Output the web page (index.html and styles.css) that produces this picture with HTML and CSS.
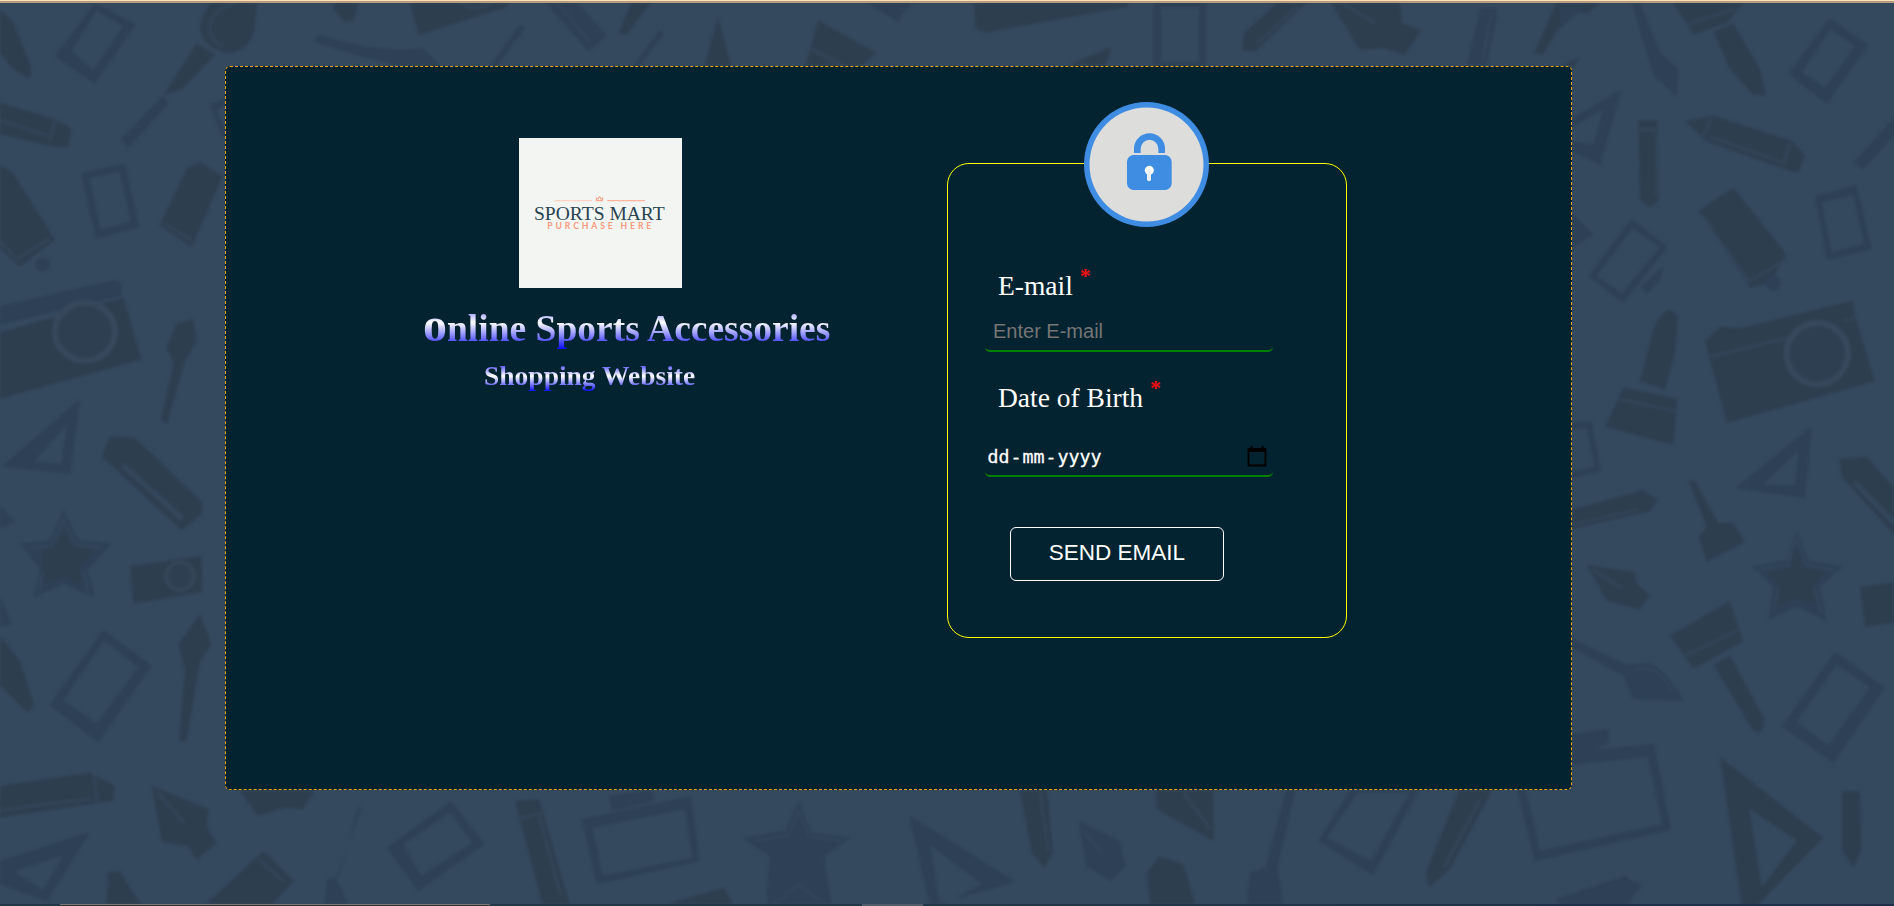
FILE: index.html
```html
<!DOCTYPE html>
<html lang="en">
<head>
<meta charset="utf-8">
<title>Online Sports Accessories</title>
<link rel="stylesheet" href="styles.css">
</head>
<body>
<svg class="pattern" viewBox="0 0 1894 906" aria-hidden="true">
  <!-- left side -->
  <g transform="scale(.33333 .5778)">
    <path class="ink" d="M0 15L40 40L90 110Q100 135 80 135L30 115L0 90Z"/>
    <path class="line" d="M165 97L285 5L408 43L283 145ZM215 88L280 122L370 45L290 18Z"/>
    <path class="ink" d="M590 75L645 95L545 155L490 165Z"/>
    <path class="line" d="M490 165L505 180L385 255L362 240Z"/>
    <path class="line" d="M630 182L676 168V238L665 235ZM650 192L676 225V180Z"/>
    <path class="ink" d="M0 178L160 205L215 222L205 255L165 255L0 232Z"/>
    <path class="gap" d="M0 208L145 235M165 205L150 245"/>
    <path class="ink" d="M0 285L40 300L165 415L60 462L0 430Z"/>
    <path class="gap" d="M0 418L50 448L150 412"/>
    <ellipse class="line" cx="127" cy="458" rx="22" ry="12"/>
    <path class="line" d="M243 300L375 283L418 393L288 413ZM268 308L302 397L392 384L360 297Z"/>
    <path class="ink" d="M478 390L560 292L600 280L668 305L575 428Z"/>
    <path class="gap" d="M490 388L575 415"/>
    <path class="line" d="M0 530L340 485L365 490V512L0 562Z"/>
    <path class="ink" d="M0 575L370 515L425 622L0 690Z"/>
    <ellipse class="ring" cx="255" cy="574" rx="90" ry="50"/>
    <path class="ink" d="M500 600L530 560L580 552L590 590L555 625L500 735L483 725L520 630Z"/>
    <path class="line" d="M5 808L240 690L212 820ZM100 800L185 802L200 735Z"/>
    <path class="ink" d="M305 790L330 755L405 757L608 870L605 890L545 918Z"/>
    <path class="gap wide" d="M368 805L548 898"/>
    <path class="line" d="M0 875L45 903L0 915Z"/>
    <path class="line" d="M190 882L235 935L335 940L265 985L285 1035L190 1010L100 1035L120 985L60 940L150 935Z"/>
    <path class="ink" d="M190 915L225 945L285 950L240 985L250 1015L190 1000L130 1008L125 950L160 945Z"/>
    <path class="gap" d="M90 948L155 945L190 900L228 943L305 948M115 1025L130 990M265 1025L252 990"/>
    <path class="ink" d="M390 980L605 962L607 1025L400 1045Z"/>
    <ellipse class="ring thin" cx="540" cy="997" rx="42" ry="24"/>
    <path class="line" d="M0 1030L35 1080L0 1085Z"/>
    <path class="ink" d="M0 1100L60 1145L100 1215Q95 1238 75 1230L0 1185Z"/>
    <path class="line" d="M148 1220L310 1090L455 1152L295 1285ZM190 1212L290 1252L415 1155L312 1108Z"/>
    <path class="ink" d="M535 1115L600 1062L635 1115L600 1145L560 1283L537 1283L555 1160Z"/>
    <path class="ink" d="M0 1360L270 1337L345 1360L340 1386L0 1415Z"/>
    <path class="gap" d="M0 1402L275 1382M282 1340L290 1388"/>
    <path class="ink" d="M455 1360L625 1400L620 1430L650 1460L590 1488L565 1465L485 1457Z"/>
    <path class="gap" d="M470 1370L555 1425"/>
    <path class="line" d="M0 1490L270 1440L140 1560L0 1530ZM40 1508L130 1540L190 1480Z"/>
    <path class="ink" d="M320 1510L360 1508L420 1564H335Z"/>
  </g>
  <!-- top edge -->
  <g transform="translate(200 0) scale(.44643 .33333)">
    <path class="ink" d="M25 8H128L122 90Q110 155 65 158Q10 150 0 90Q0 45 25 8Z"/>
    <path class="gap" d="M50 140Q20 120 22 70Q30 30 80 8"/>
    <path class="ink" d="M300 8H355L345 60L325 65L300 30ZM470 8H690V20L490 105Z"/>
    <path class="gap" d="M585 8Q615 40 655 8"/>
    <path class="line" d="M265 105L370 140L450 150L500 145L540 198H450L350 165L255 125ZM715 75L730 80L665 198H650Z"/>
    <path class="line" d="M775 8H845L912 105L870 155Z"/>
    <path class="gap" d="M800 8L872 125"/>
    <path class="ink" d="M965 8H1010L955 105L938 100ZM1160 50L1190 198H1130Z"/>
    <path class="line" d="M1028 92L1040 100L985 198H970ZM1495 8H1568V70Z"/>
    <path class="ink" d="M1385 60L1515 160L1480 198H1355Z"/>
    <path class="gap" d="M1368 145L1440 198"/>
  </g>
  <g transform="translate(900 0) scale(.44643 .33333)">
    <path class="line" d="M0 8H30L0 50ZM567 8H686V198H567ZM584 22V185H670V22Z"/>
    <path class="ink" d="M165 8H510V20L190 98L170 85ZM385 190L475 140L460 198H385Z"/>
    <path class="ink" d="M845 8H910L795 155L765 150L770 100Z"/>
    <path class="gap" d="M890 20L800 130"/>
    <path class="ink" d="M965 8H1120L1125 70L1168 90L1130 165L1085 145L1030 150Z"/>
    <path class="gap" d="M990 8L1065 70"/>
    <path class="line" d="M1300 25L1340 25L1315 195H1270Z"/>
    <path class="gap" d="M1325 45L1305 180"/>
    <path class="ink" d="M1470 8H1568L1540 40L1500 30L1440 165L1420 160ZM1480 198L1525 170L1510 198Z"/>
  </g>
  <!-- bottom edge -->
  <g transform="translate(0 776) scale(.60588 .33333)">
    <path class="ink" d="M395 42H520L500 100L470 95L425 120ZM340 384L435 225L485 315L450 384ZM180 285L235 384H175Z"/>
    <path class="gap" d="M425 245L468 318"/>
    <path class="line" d="M590 95H597L575 200L555 310L575 384H535L540 310L560 300Z"/>
    <path class="line" d="M638 215L745 75L800 205L690 345ZM665 205L695 300L780 200L742 110Z"/>
    <path class="ink" d="M850 75L890 70L940 384H895Z"/>
    <path class="gap" d="M890 120L925 355M852 130L895 110"/>
    <path class="line" d="M960 130L1140 60L1155 255L985 325ZM978 155L995 300L1143 245L1130 100ZM1005 60L1075 42L1080 75L1010 105Z"/>
    <path class="line" d="M1318 75L1340 170L1405 185L1360 240L1372 384H1265L1270 240L1225 185L1295 165Z"/>
    <path class="gap" d="M1318 105L1336 180L1388 195M1318 105L1300 178L1245 193M1278 384L1318 325L1360 384"/>
    <path class="ink" d="M1100 384L1195 335L1210 384Z"/>
  </g>
  <path class="line" d="M909 815L1016 882L930 906ZM930 845L940 906L982 884Z"/>
  <g transform="translate(944 776) scale(.60588 .33333)">
    <path class="ink" d="M125 42H170L180 230L165 275L145 230ZM350 42H445V195L350 100Z"/>
    <path class="gap" d="M158 42L172 225M395 50L440 160"/>
    <path class="line" d="M222 135L290 195L300 270L275 315L235 270Z"/>
    <path class="gap" d="M230 165L260 230"/>
    <path class="ink" d="M335 290L355 240L395 265L415 384H340Z"/>
    <path class="line" d="M565 42H580L550 280L560 384H500L505 290L530 275Z"/>
    <path class="line" d="M670 42H785L708 298L618 195ZM683 50L632 185L705 255L768 50Z"/>
    <path class="ink" d="M850 42H905L835 280L800 335L795 290Z"/>
    <path class="gap" d="M885 70L825 275"/>
    <path class="ink" d="M1010 370L1125 300L1150 340L1100 384H1020Z"/>
  </g>
  <!-- right side -->
  <path class="line" d="M1572 752L1654 744L1671 830L1535 861L1517 790H1526L1540 851L1662 824L1648 757L1572 765Z"/>
  <g transform="translate(1560 0) scale(.33333 .5778)">
    <path class="line" d="M0 8H80L0 50ZM215 5H240L300 90L355 120L350 168L280 130Z"/>
    <path class="ink" d="M340 5H550L500 40L400 60ZM460 55L520 40L600 120L618 165L580 165L510 120Z"/>
    <path class="gap" d="M380 42L530 15"/>
    <path class="line" d="M685 128L808 32L925 78L800 180ZM725 125L795 152L885 80L812 50Z"/>
    <path class="line" d="M36 205L185 155L120 285L36 262ZM36 220V245L100 250L130 190Z"/>
    <path class="ink" d="M235 208H292L297 345L270 360L240 345Z"/>
    <path class="gap" d="M235 225H290M289 230V340"/>
    <path class="ink" d="M375 210L460 200L700 245L735 270L715 300L660 290L440 245Z"/>
    <path class="gap" d="M450 237L665 280M455 205L430 235M690 248L670 285"/>
    <path class="line" d="M1002 205V235L910 293L882 280ZM36 370L100 405L36 430Z"/>
    <path class="line" d="M85 478L215 378L322 428L190 525ZM110 478L185 508L300 428L218 395ZM245 495L310 460L300 485L260 510Z"/>
    <path class="ink" d="M415 365L520 325L680 440L630 490L570 498Z"/>
    <path class="gap" d="M425 372L565 487L665 455"/>
    <ellipse class="line" cx="640" cy="490" rx="22" ry="14"/>
    <path class="line" d="M765 340L890 320L935 432L800 450ZM785 350L815 437L912 422L880 337Z"/>
    <path class="ink" d="M240 660L280 570Q325 515 355 550L345 610L315 675ZM190 670L352 690L340 770L135 738Z"/>
    <path class="gap" d="M175 690L350 712"/>
    <path class="ink" d="M435 590L480 565L540 568L880 520L885 545L945 660L500 732Z"/>
    <path class="gap" d="M450 617L680 585M850 556L890 548"/>
    <ellipse class="ring" cx="772" cy="612" rx="92" ry="53"/>
    <path class="line" d="M36 730H95L122 815L36 828ZM36 742V815L105 808L80 742Z"/>
    <path class="line" d="M525 845L755 738L735 862ZM610 838L705 840L715 780Z"/>
    <path class="ink" d="M838 795L920 790L1002 845V925L845 825Z"/>
    <path class="gap wide" d="M885 835L1002 905"/>
    <path class="ink" d="M36 882L250 848L292 865L270 885L36 915Z"/>
    <path class="gap" d="M36 908L235 882"/>
    <path class="ink" d="M385 832H405L475 905H520L555 938L440 972L415 930L440 912Z"/>
    <path class="ink" d="M80 978L225 990L230 1010L270 1030L240 1055L140 1040Z"/>
    <path class="gap" d="M95 985L185 1018"/>
    <path class="line" d="M710 918L745 970L850 980L780 1015L798 1073L710 1050L625 1073L640 1015L575 980L680 970Z"/>
    <path class="ink" d="M710 950L735 982L800 988L760 1015L770 1050L710 1035L650 1052L655 1015L620 990L690 982Z"/>
    <path class="gap" d="M600 984L682 978L710 932L740 978L825 986M640 1062L655 1020M784 1062L765 1020"/>
    <path class="ink" d="M900 1015L1002 1008V1078L915 1085Z"/>
    <path class="line" d="M36 1105L200 1150L270 1148Q320 1160 370 1213L220 1210L190 1170L36 1120Z"/>
    <path class="gap" d="M220 1160Q290 1145 335 1195"/>
    <path class="ink" d="M330 1100L510 1040L550 1110L400 1158ZM460 1150L510 1135L610 1240Q620 1275 580 1265Z"/>
    <path class="gap" d="M375 1135L535 1090"/>
    <path class="line" d="M665 1258L825 1128L975 1190L820 1320ZM710 1250L805 1290L930 1190L830 1150Z"/>
    <path class="ink" d="M480 1310L790 1450L590 1568H545ZM568 1400L605 1535L710 1455Z"/>
    <path class="ink" d="M845 1370H900L905 1470L880 1503L845 1470Z"/>
    <path class="line" d="M0 1555L190 1520L245 1530L200 1568H0ZM36 1270L145 1262V1285L100 1300L36 1305Z"/>
  </g>
</svg>

<div class="page">
  <div class="top-edge"></div>
  <main class="box">
    <section class="brand">
      <svg class="logo" viewBox="357 54 489 450" role="img">
        <path d="M463 242H576" stroke="#fbd3c5" stroke-width="4"/>
        <path d="M622 242H735" stroke="#fdb59d" stroke-width="4"/>
        <path d="M589 233L594 238L599 229L603 238L608 233V242H589Z" fill="none" stroke="#fb9a7c" stroke-width="3"/>
        <text class="logo-name" x="402" y="301" textLength="392" lengthAdjust="spacingAndGlyphs">SPORTS MART</text>
        <text class="logo-tag" x="442" y="328" textLength="312">PURCHASE HERE</text>
      </svg>
      <h1 class="title"><span class="initial">o</span>nline Sports Accessories</h1>
      <h2 class="subtitle">Shopping Website</h2>
    </section>
    <form class="panel">
      <svg class="lock" viewBox="462 36 375 375">
        <circle cx="649.5" cy="223.5" r="187.5" fill="#3f8ce3"/>
        <circle cx="649.5" cy="223.5" r="171" fill="#dddedc"/>
        <path d="M622 189V176A36 36 0 0 1 695 176V189" fill="none" stroke="#3f8ce3" stroke-width="20"/>
        <rect x="591" y="195" width="134" height="105" rx="20" fill="#3f8ce3"/>
        <circle cx="658" cy="241" r="13.500" fill="#fff"/>
        <path d="M657 245V268" stroke="#eef1f4" stroke-width="12" stroke-linecap="round"/>
      </svg>
      <label class="label">E-mail <span class="star">*</span></label>
      <div class="field email">Enter E-mail</div>
      <label class="label dob">Date of Birth <span class="star">*</span></label>
      <div class="field date">
        <span class="parts"><span>dd</span><span>-</span><span>mm</span><span>-</span><span>yyyy</span></span>
        <svg class="calendar" viewBox="0 0 20 21"><path d="M1.500 3H18.500V19.500H1.500Z" fill="none" stroke="#000" stroke-width="1.800"/><path d="M1 2H19V6H1ZM3.500 0H5.500V3H3.500ZM14.500 0H16.500V3H14.500Z"/></svg>
      </div>
      <button class="send" type="button">SEND EMAIL</button>
    </form>
  </main>
  <footer class="bottom-edge"><i class="seg wide-seg"></i><i class="seg small-seg"></i></footer>
</div>
</body>
</html>
```

FILE: styles.css
```css
* { box-sizing: border-box; }
body { margin: 0; background: #35495e; overflow: hidden; }

.pattern { position: absolute; inset: 0; width: 1894px; height: 906px; filter: blur(1.4px); }
.ink { fill: #2d3e4f; fill-rule: evenodd; }
.line { fill: #2d4055; fill-rule: evenodd; }
.gap { fill: none; stroke: #34485c; stroke-width: 2; vector-effect: non-scaling-stroke; }
.wide { stroke-width: 5; }
.ring { fill: #2d3f50; stroke: #36485b; stroke-width: 6; vector-effect: non-scaling-stroke; }
.thin { stroke-width: 3; }

.page { position: relative; display: flex; flex-direction: column; width: 1894px; height: 906px; }
.top-edge { height: 3px; background: #b59b80; border-top: 1px solid #fcdfb2; }

.box {
  display: flex;
  width: 1347px;
  height: 724px;
  margin: 63px 0 0 225px;
  border: 1px dashed orange;
  border-radius: 5px;
  background: #032330;
}

.brand { width: 721px; padding: 71px 0 0 197px; }
.logo { display: block; width: 163px; height: 150px; margin-left: 96px; background: #f3f5f2; }
.logo-name { font: 57px "Liberation Serif", serif; fill: #294351; }
.logo-tag { font: 700 26px Lato, sans-serif; fill: #fb9a7c; }

.title, .subtitle {
  width: max-content;
  margin: 0;
  font-family: "Liberation Serif", serif;
  font-weight: 700;
  white-space: nowrap;
  color: transparent;
  background: linear-gradient(blue, white, blue);
  -webkit-background-clip: text;
  background-clip: text;
}
.title { height: 55px; margin-top: 7px; padding-top: 6px; font-size: 37.5px; line-height: 55px; }
.initial { font-size: 48px; line-height: 1; }
.subtitle { margin: 10px 0 0 61px; font-size: 27.5px; line-height: 32px; }

.panel {
  display: flex;
  flex-direction: column;
  align-items: flex-start;
  width: 400px;
  height: 475px;
  margin-top: 96px;
  padding-left: 37px;
  border: 1px solid yellow;
  border-radius: 22px;
}
.lock { width: 125px; height: 125px; margin: -62px 0 0 99px; flex: none; }

.label { height: 32px; margin: 43px 0 0 13px; font: 27.500px/32px "Liberation Serif", serif; color: #fff; }
.dob { margin-top: 30px; }
.star { display: inline-block; font-size: 22px; font-weight: 700; line-height: 1; color: #f50d12; transform: translateY(-12px); }

.field { display: flex; width: 288px; border-bottom: 2px solid green; border-radius: 5px; }
.email { height: 42px; margin-top: 8px; padding-left: 8px; font: 20px/43px "Liberation Sans", sans-serif; color: #757575; }
.date {
  justify-content: space-between;
  align-items: center;
  height: 46px;
  margin-top: 17px;
  padding: 6px 6px 0 2px;
  font: 18.300px/24px "DejaVu Sans Mono", monospace;
  -webkit-text-stroke: .3px #fff;
  color: #fff;
}
.parts { display: flex; padding-top: 1px; }
.parts span { padding: 0 .5px; }
.calendar { width: 20px; height: 21px; }

.send {
  width: 214px;
  height: 54px;
  margin: 50px 0 0 25px;
  padding: 0 0 2px;
  border: 1px solid #fff;
  border-radius: 6px;
  background: none;
  font: 22.5px "Liberation Sans", sans-serif;
  color: #fff;
}

.bottom-edge { display: flex; height: 2px; margin-top: auto; background: linear-gradient(90deg, #213848, #213848 50%, #1f2f4a); }
.seg { height: 2px; }
.wide-seg { width: 430px; margin-left: 60px; background: #333; border-top: 1px solid #777; }
.small-seg { width: 61px; margin-left: 372px; background: #505c68; }
```
